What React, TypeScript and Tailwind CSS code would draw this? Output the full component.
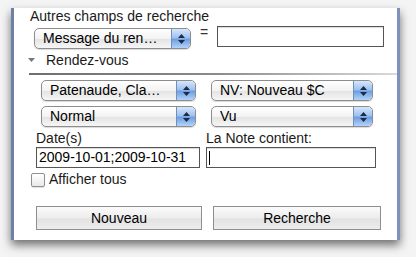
const font = "font-['Lucida_Grande','Liberation_Sans',Arial,sans-serif]";

function Stepper() {
  return (
    <div className="flex h-full w-[19px] flex-col items-center justify-center gap-[2px] rounded-r-[4px] border-l border-[#6f8fbf] bg-[linear-gradient(#d6e6fb,#9ec2f0_45%,#6e9fe2_55%,#b4d3fa)]">
      <svg width="7" height="4" viewBox="0 0 7 4">
        <path d="M3.5 0 L7 4 L0 4 Z" fill="#1c2a44" />
      </svg>
      <svg width="7" height="4" viewBox="0 0 7 4">
        <path d="M0 0 L7 0 L3.5 4 Z" fill="#1c2a44" />
      </svg>
    </div>
  );
}

function Select({ label, w }: { label: string; w: string }) {
  return (
    <div
      className={`${w} flex h-[21px] items-stretch overflow-hidden rounded-[5px] border border-[#8d8d8d] bg-[linear-gradient(#ffffff,#f3f3f3_50%,#e4e4e4_55%,#f6f6f6)] shadow-[0_1px_1px_rgba(0,0,0,0.15)]`}
    >
      <div className="flex-1 truncate pl-[8px] text-[14px] leading-[19px] text-black">{label}</div>
      <Stepper />
    </div>
  );
}

function Button({ label, w }: { label: string; w: string }) {
  return (
    <div
      className={`${w} flex h-[24px] items-center justify-center border border-[#8e8e8e] bg-[linear-gradient(#fbfbfb,#ececec_50%,#e2e2e2_55%,#ededed)] text-[14px] text-black`}
    >
      {label}
    </div>
  );
}

export default function App() {
  return (
    <div className={`${font} h-[257px] w-[416px] overflow-hidden bg-[#f4f4f4] pt-[8px]`}>
      <div className="ml-[11px] h-[232px] w-[389px] border-l-[3px] border-r-[3px] border-l-[#6d80a8] border-r-[#7e91bb] bg-white shadow-[0_5px_9px_rgba(0,0,0,0.55)]">
        <div className="h-[17px] pl-[16px] text-[14px] leading-[17px] text-[#1a1a1a]">
          Autres champs de recherche
        </div>

        <div className="flex h-[24px] items-start">
          <div className="ml-[20px] mt-[3px]">
            <Select label="Message du ren…" w="w-[157px]" />
          </div>
          <div className="ml-[9px] text-[14px] leading-[14px] text-[#333]">=</div>
          <div className="ml-[9px] mt-[1px] h-[21px] w-[167px] border border-[#555] bg-white shadow-[inset_0_1px_1px_rgba(0,0,0,0.15)]" />
        </div>

        <div className="flex h-[22px] items-center pl-[14px] text-[14px] text-[#1a1a1a]">
          <svg width="7" height="4" viewBox="0 0 7 4" className="mr-[11px]">
            <path d="M0 0 L7 0 L3.5 4 Z" fill="#777" />
          </svg>
          Rendez-vous
        </div>

        <div className="ml-[15px] mt-[2px] h-[2px] bg-[linear-gradient(90deg,#6e6e6e,#8a8a8a_50%,#dadada)]" />

        <div className="mt-[5px] flex flex-col gap-[5px]">
          <div className="flex">
            <div className="ml-[27px]">
              <Select label="Patenaude, Cla…" w="w-[155px]" />
            </div>
            <div className="ml-[15px]">
              <Select label="NV: Nouveau $C" w="w-[162px]" />
            </div>
          </div>
          <div className="flex">
            <div className="ml-[27px]">
              <Select label="Normal" w="w-[155px]" />
            </div>
            <div className="ml-[15px]">
              <Select label="Vu" w="w-[162px]" />
            </div>
          </div>
        </div>

        <div className="flex h-[20px] items-end pb-[1px] text-[14px] leading-[16px] text-[#1a1a1a]">
          <div className="ml-[22px] w-[170px]">Date(s)</div>
          <div>La Note contient:</div>
        </div>

        <div className="flex">
          <div className="ml-[22px] flex h-[21px] w-[164px] items-center border border-[#555] bg-white pl-[2px] text-[14px] text-black shadow-[inset_0_1px_1px_rgba(0,0,0,0.15)]">
            2009-10-01;2009-10-31
          </div>
          <div className="ml-[6px] flex h-[21px] w-[170px] items-center border border-[#555] bg-white pl-[2px] shadow-[inset_0_1px_1px_rgba(0,0,0,0.15)]">
            <div className="h-[14px] w-[1px] bg-black" />
          </div>
        </div>

        <div className="mt-[4px] flex h-[15px] items-center">
          <div className="ml-[17px] h-[14px] w-[14px] rounded-[2px] border border-[#8f8f8f] bg-[linear-gradient(#ffffff,#e9e9e9)] shadow-[0_1px_1px_rgba(0,0,0,0.12)]" />
          <div className="ml-[4px] text-[14px] text-[#1a1a1a]">Afficher tous</div>
        </div>

        <div className="mt-[19px] flex">
          <div className="ml-[22px]">
            <Button label="Nouveau" w="w-[166px]" />
          </div>
          <div className="ml-[11px]">
            <Button label="Recherche" w="w-[168px]" />
          </div>
        </div>
      </div>
    </div>
  );
}
